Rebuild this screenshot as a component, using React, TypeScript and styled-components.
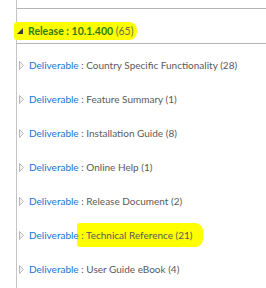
import React from 'react';
import styled, { createGlobalStyle } from 'styled-components';

const GlobalStyle = createGlobalStyle`
    html, body {
        margin: 0;
        padding: 0;
        background: #ffffff;
    }
    body {
        font-family: Lato, 'Liberation Sans', sans-serif;
        font-size: 10px;
    }
`;

const Tree = styled.div`
    margin-left: 16px;
    border-left: 1px solid #c4c4c4;
    min-height: 288px;
    box-sizing: border-box;
    padding-top: 8px;
`;

const Header = styled.div`
    display: flex;
    align-items: center;
    height: 36px;
    padding-top: 10px;
    box-sizing: border-box;
    border-top: 1px solid #b4b4b4;
    border-bottom: 1px solid #b4b4b4;
`;

const Marker = styled.span<{ $left: number; $right: number; $v: number }>`
    display: inline-flex;
    align-items: center;
    background: #ffff00;
    border-radius: 3px 8px 8px 3px;
    padding: ${(p) => p.$v}px ${(p) => p.$right}px ${(p) => p.$v}px ${(p) => p.$left}px;
    margin-left: -${(p) => p.$left}px;
`;

const Row = styled.div`
    display: flex;
    align-items: center;
    height: 34px;
    padding-left: 2px;
    white-space: nowrap;
    color: #5a5a5a;
`;

const Toggle = styled.svg`
    flex: none;
    margin-right: 5px;
`;

const ReleaseLabel = styled.span`
    color: #2e7d12;
    font-weight: 700;
    font-size: 10.5px;
`;

const Count = styled.span`
    font-weight: 400;
    color: #6a7040;
`;

const Kind = styled.span`
    color: #1a73d4;
    position: relative;
    z-index: 1;
`;

const List = styled.div`
    padding-top: 4px;
`;

const Collapsed = () => (
    <Toggle width="5" height="9" viewBox="0 0 5 9">
        <path d="M0.5 0.5 L4.5 4.5 L0.5 8.5 Z" fill="#f2f2f2" stroke="#b8b8b8" strokeWidth="1" />
    </Toggle>
);

const Expanded = () => (
    <Toggle width="6" height="6" viewBox="0 0 6 6">
        <path d="M6 0 L6 6 L0 6 Z" fill="#3a3a3a" />
    </Toggle>
);

const items: { name: string; count: number; mark?: boolean }[] = [
    { name: 'Country Specific Functionality', count: 28 },
    { name: 'Feature Summary', count: 1 },
    { name: 'Installation Guide', count: 8 },
    { name: 'Online Help', count: 1 },
    { name: 'Release Document', count: 2 },
    { name: 'Technical Reference', count: 21, mark: true },
    { name: 'User Guide eBook', count: 4 },
];

export default function App() {
    return (
        <>
            <GlobalStyle />
            <Tree>
                <Header>
                    <Marker $left={3} $right={4} $v={3}>
                        <Expanded />
                        <ReleaseLabel>
                            Release : 10.1.400 <Count>(65)</Count>
                        </ReleaseLabel>
                    </Marker>
                </Header>
                <List>
                    {items.map((it) => (
                        <Row key={it.name}>
                            <Collapsed />
                            <Kind>Deliverable</Kind>
                            {it.mark ? (
                                <Marker $left={2} $right={10} $v={6}>
                                    &nbsp;: {it.name} ({it.count})
                                </Marker>
                            ) : (
                                <span>&nbsp;: {it.name} ({it.count})</span>
                            )}
                        </Row>
                    ))}
                </List>
            </Tree>
        </>
    );
}
